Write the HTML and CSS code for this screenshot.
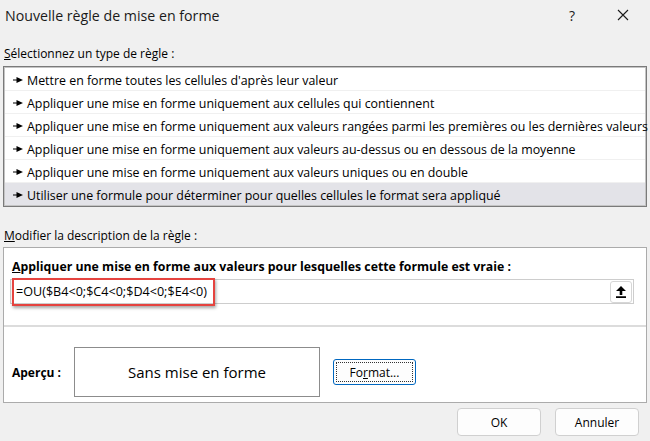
FILE: index.html
```html
<!DOCTYPE html>
<html lang="fr">
<head>
    <meta charset="UTF-8">
    <title>Nouvelle règle de mise en forme</title>
    <link rel="stylesheet" href="styles.css">
</head>
<body>
    <div class="dialog">
        <div class="titlebar">
            <span class="title">Nouvelle règle de mise en forme</span>
            <span class="help">?</span>
            <svg class="close" width="12" height="12" viewBox="0 0 12 12"><path d="M1 1 L11 11 M11 1 L1 11" stroke="#1a1a1a" stroke-width="1.1"/></svg>
        </div>

        <div class="label label-first"><u>S</u>électionnez un type de règle :</div>
        <div class="listbox">
            <div class="row"><svg class="pointer" width="10" height="6" viewBox="0 0 10 6"><path d="M0 2.5h4v1H0z M3.5 0 L10 3 L3.5 6 z" fill="#000"/></svg>Mettre en forme toutes les cellules d'après leur valeur</div>
            <div class="row"><svg class="pointer" width="10" height="6" viewBox="0 0 10 6"><path d="M0 2.5h4v1H0z M3.5 0 L10 3 L3.5 6 z" fill="#000"/></svg>Appliquer une mise en forme uniquement aux cellules qui contiennent</div>
            <div class="row"><svg class="pointer" width="10" height="6" viewBox="0 0 10 6"><path d="M0 2.5h4v1H0z M3.5 0 L10 3 L3.5 6 z" fill="#000"/></svg>Appliquer une mise en forme uniquement aux valeurs rangées parmi les premières ou les dernières valeurs</div>
            <div class="row"><svg class="pointer" width="10" height="6" viewBox="0 0 10 6"><path d="M0 2.5h4v1H0z M3.5 0 L10 3 L3.5 6 z" fill="#000"/></svg>Appliquer une mise en forme uniquement aux valeurs au-dessus ou en dessous de la moyenne</div>
            <div class="row"><svg class="pointer" width="10" height="6" viewBox="0 0 10 6"><path d="M0 2.5h4v1H0z M3.5 0 L10 3 L3.5 6 z" fill="#000"/></svg>Appliquer une mise en forme uniquement aux valeurs uniques ou en double</div>
            <div class="row selected"><svg class="pointer" width="10" height="6" viewBox="0 0 10 6"><path d="M0 2.5h4v1H0z M3.5 0 L10 3 L3.5 6 z" fill="#000"/></svg>Utiliser une formule pour déterminer pour quelles cellules le format sera appliqué</div>
        </div>

        <div class="label label-second"><u>M</u>odifier la description de la règle :</div>
        <div class="rule-box">
            <div class="rule-top">
                <div class="rule-title"><u>A</u>ppliquer une mise en forme aux valeurs pour lesquelles cette formule est vraie :</div>
                <div class="formula-field">
                    <span class="formula">=OU($B4&lt;0;$C4&lt;0;$D4&lt;0;$E4&lt;0)</span>
                    <span class="highlight"></span>
                    <span class="collapse-btn">
                        <svg width="10" height="12" viewBox="0 0 10 12"><path d="M5 0 L10 5 L6.3 5 L6.3 9 L3.7 9 L3.7 5 L0 5 z M0 10.3 h10 v1.7 h-10 z" fill="#000"/></svg>
                    </span>
                </div>
            </div>
            <div class="rule-bottom">
                <span class="preview-label">Aperçu :</span>
                <div class="preview">Sans mise en forme</div>
                <button class="btn-format">Fo<u>r</u>mat...</button>
            </div>
        </div>

        <div class="footer">
            <button class="btn">OK</button>
            <button class="btn">Annuler</button>
        </div>
    </div>
</body>
</html>
```

FILE: styles.css
```css
body {
    margin: 0;
    background-color: #f0f0f0;
    font-family: 'Open Sans', 'Noto Sans', sans-serif;
    font-size: 12px;
    color: #000;
}
.dialog {
    width: 650px;
    height: 441px;
    display: flex;
    flex-direction: column;
}
.titlebar {
    height: 30px;
    display: flex;
    align-items: center;
    padding-left: 5px;
}
.title {
    font-size: 14.2px;
    color: #1a1a1a;
    flex: 1;
}
.help {
    font-size: 14px;
    color: #1a1a1a;
    margin-right: 42px;
}
.close {
    margin-right: 21px;
}
.label {
    line-height: 16px;
    padding-left: 4px;
}
.label-first {
    margin-top: 16px;
}
.label-second {
    margin-top: 21px;
}
.listbox {
    margin: 4px 3px 0 3px;
    border: 1px solid #7a7a7a;
    box-shadow: inset 0 0 0 1px #c4c4c4;
    padding: 1px;
    background: #fff;
}
.row {
    box-sizing: border-box;
    height: 23px;
    display: flex;
    align-items: center;
    font-size: 12.4px;
    padding: 2px 0 0 8px;
    border-bottom: 1px solid #f0f0f0;
    white-space: nowrap;
}
.row:last-child {
    height: 22px;
    border-bottom: none;
}
.row.selected {
    background-color: #e3e3e8;
}
.pointer {
    flex-shrink: 0;
    margin-right: 4px;
}
.rule-box {
    margin: 3px 3px 0 3px;
    border: 1px solid #ababab;
    background: #fff;
}
.rule-top {
    padding: 11px 0 21px 6px;
}
.rule-title {
    font-weight: bold;
    font-size: 12.3px;
    line-height: 16px;
    padding-left: 2px;
}
.formula-field {
    position: relative;
    margin-top: 4px;
    width: 622px;
    height: 23px;
    border: 1px solid #cdcdcd;
    display: flex;
    align-items: center;
    justify-content: space-between;
    font-size: 12.6px;
}
.formula {
    padding-left: 5px;
}
.highlight {
    position: absolute;
    left: 1px;
    top: -2px;
    width: 199px;
    height: 24px;
    border: 2px solid #e5433f;
    box-shadow: 1px 2px 3px rgba(0, 0, 0, 0.35);
}
.collapse-btn {
    width: 20px;
    height: 20px;
    margin-right: 1px;
    border: 1px solid #d6d6d6;
    border-radius: 3px;
    display: flex;
    align-items: center;
    justify-content: center;
}
.rule-bottom {
    border-top: 2px solid #dcdcdc;
    padding: 20px 0 5px 8px;
    display: flex;
    align-items: center;
}
.preview-label {
    font-weight: bold;
    width: 62px;
}
.preview {
    width: 244px;
    height: 48px;
    border: 1px solid #8c8c8c;
    display: flex;
    align-items: center;
    justify-content: center;
    font-size: 15px;
}
.btn-format {
    margin-left: 13px;
    width: 83px;
    height: 26px;
    font-family: inherit;
    font-size: 12px;
    background: #fdfdfd;
    border: 1px solid #0067c0;
    border-radius: 3px;
    outline: 1px dotted #333;
    outline-offset: -4px;
    padding: 0;
}
.footer {
    display: flex;
    justify-content: flex-end;
    gap: 14px;
    padding: 5px 11px 0 0;
}
.btn {
    width: 84px;
    height: 28px;
    font-family: inherit;
    font-size: 12px;
    background: #fdfdfd;
    border: 1px solid #d0d0d0;
    border-radius: 4px;
    padding: 0;
}
```
